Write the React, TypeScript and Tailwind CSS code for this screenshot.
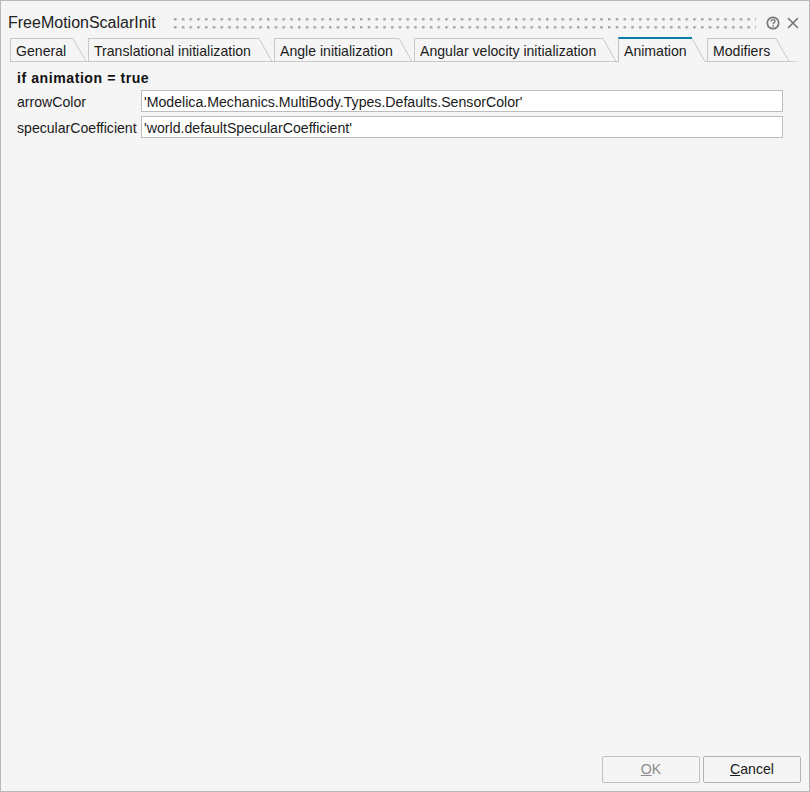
import React, { FC } from "react";

const font = "font-['Liberation_Sans',Arial,sans-serif]";

const tabs = [
  { label: "General", width: "w-[63px]", active: false },
  { label: "Translational initialization", width: "w-[171px]", active: false },
  { label: "Angle initialization", width: "w-[125px]", active: false },
  { label: "Angular velocity initialization", width: "w-[189px]", active: false },
  { label: "Animation", width: "w-[74px]", active: true },
  { label: "Modifiers", width: "w-[69px]", active: false },
];

const Tab: FC<{ label: string; width: string; active: boolean }> = ({
  label,
  width,
  active,
}) => {
  return (
    <div className="flex items-end h-6">
      <div
        className={
          active
            ? `${width} h-[25px] border-t-2 border-l border-[#c0c0c0] border-t-[#0a7da8] pl-[5px] pt-[4px] text-[14.1px] leading-4 whitespace-nowrap text-[#1a1a1a]`
            : `${width} h-6 border-t border-l border-b border-[#c8c8c8] pl-[5px] pt-[4px] text-[14.1px] leading-4 whitespace-nowrap text-[#1a1a1a]`
        }
      >
        {label}
      </div>
      <svg width="13" height="24" className="block">
        <line x1="0" y1="0.5" x2="13" y2="23.5" stroke="#c8c8c8" />
        {!active && <line x1="0" y1="23.5" x2="13" y2="23.5" stroke="#c8c8c8" />}
      </svg>
      <div className="w-[2px] h-6 border-b border-[#c8c8c8]" />
    </div>
  );
};

const Field: FC<{ label: string; value: string }> = ({ label, value }) => {
  return (
    <div className="flex items-center h-[22px]">
      <span className="w-[124px] pt-[2px] text-[14.1px] leading-4 text-[#1a1a1a]">
        {label}
      </span>
      <div className="w-[642px] h-[22px] bg-white border border-[#bdbdbd] pl-[2px] pt-[1px] text-[14.15px] leading-5 text-[#1a1a1a]">
        {value}
      </div>
    </div>
  );
};

export default function App() {
  return (
    <div
      className={`${font} w-[810px] h-[792px] bg-[#f5f5f5] border border-[#b9b9b9] flex flex-col`}
    >
      <div className="flex items-center h-[37px] pt-[7px] pl-[7px] shrink-0">
        <span className="text-[16px] leading-5 text-[#222] w-[166px]">
          FreeMotionScalarInit
        </span>
        <svg width="582" height="12" className="block">
          <defs>
            <pattern id="grip" width="7.75" height="12" patternUnits="userSpaceOnUse">
              <rect x="0" y="1" width="2.5" height="2.5" fill="#a8a8a8" />
              <rect x="0" y="9" width="2.5" height="2.5" fill="#a8a8a8" />
            </pattern>
          </defs>
          <rect x="0" y="0" width="582" height="12" fill="url(#grip)" />
        </svg>
        <svg width="14" height="14" viewBox="0 0 14 14" className="ml-[10px]">
          <circle cx="7" cy="7" r="5.7" fill="none" stroke="#757575" strokeWidth="1.7" />
          <path
            d="M5 5.6c0-1.2 1-1.9 2-1.9s2 .7 2 1.7c0 1.4-2 1.4-2 2.9"
            fill="none"
            stroke="#757575"
            strokeWidth="1.3"
          />
          <rect x="6.3" y="9.4" width="1.5" height="1.5" fill="#757575" />
        </svg>
        <svg width="12" height="12" viewBox="0 0 12 12" className="ml-[7px]">
          <path d="M1 1l10 10M11 1L1 11" stroke="#757575" strokeWidth="1.6" />
        </svg>
      </div>

      <div className="flex items-end pl-[9px] shrink-0">
        {tabs.map((tab) => (
          <Tab key={tab.label} {...tab} />
        ))}
        <div className="w-[10px] h-px bg-gradient-to-r from-[#c8c8c8] to-transparent" />
      </div>

      <div className="flex flex-col flex-1 pl-4 pt-[8px]">
        <div className="text-[14.1px] leading-4 font-bold tracking-[0.55px] text-[#111] mb-[4px]">
          if animation = true
        </div>
        <div className="flex flex-col gap-1">
          <Field
            label="arrowColor"
            value="'Modelica.Mechanics.MultiBody.Types.Defaults.SensorColor'"
          />
          <Field
            label="specularCoefficient"
            value="'world.defaultSpecularCoefficient'"
          />
        </div>
      </div>

      <div className="flex justify-end gap-[3px] pr-2 pb-[8px] shrink-0">
        <button className="w-[98px] h-[27px] border border-[#c0c0c0] rounded-[2px] text-[14.1px] text-[#8c8c8c]">
          <span className="underline">O</span>K
        </button>
        <button className="w-[98px] h-[27px] border border-[#b4b4b4] rounded-[2px] text-[14.1px] text-[#1a1a1a]">
          <span className="underline">C</span>ancel
        </button>
      </div>
    </div>
  );
}
